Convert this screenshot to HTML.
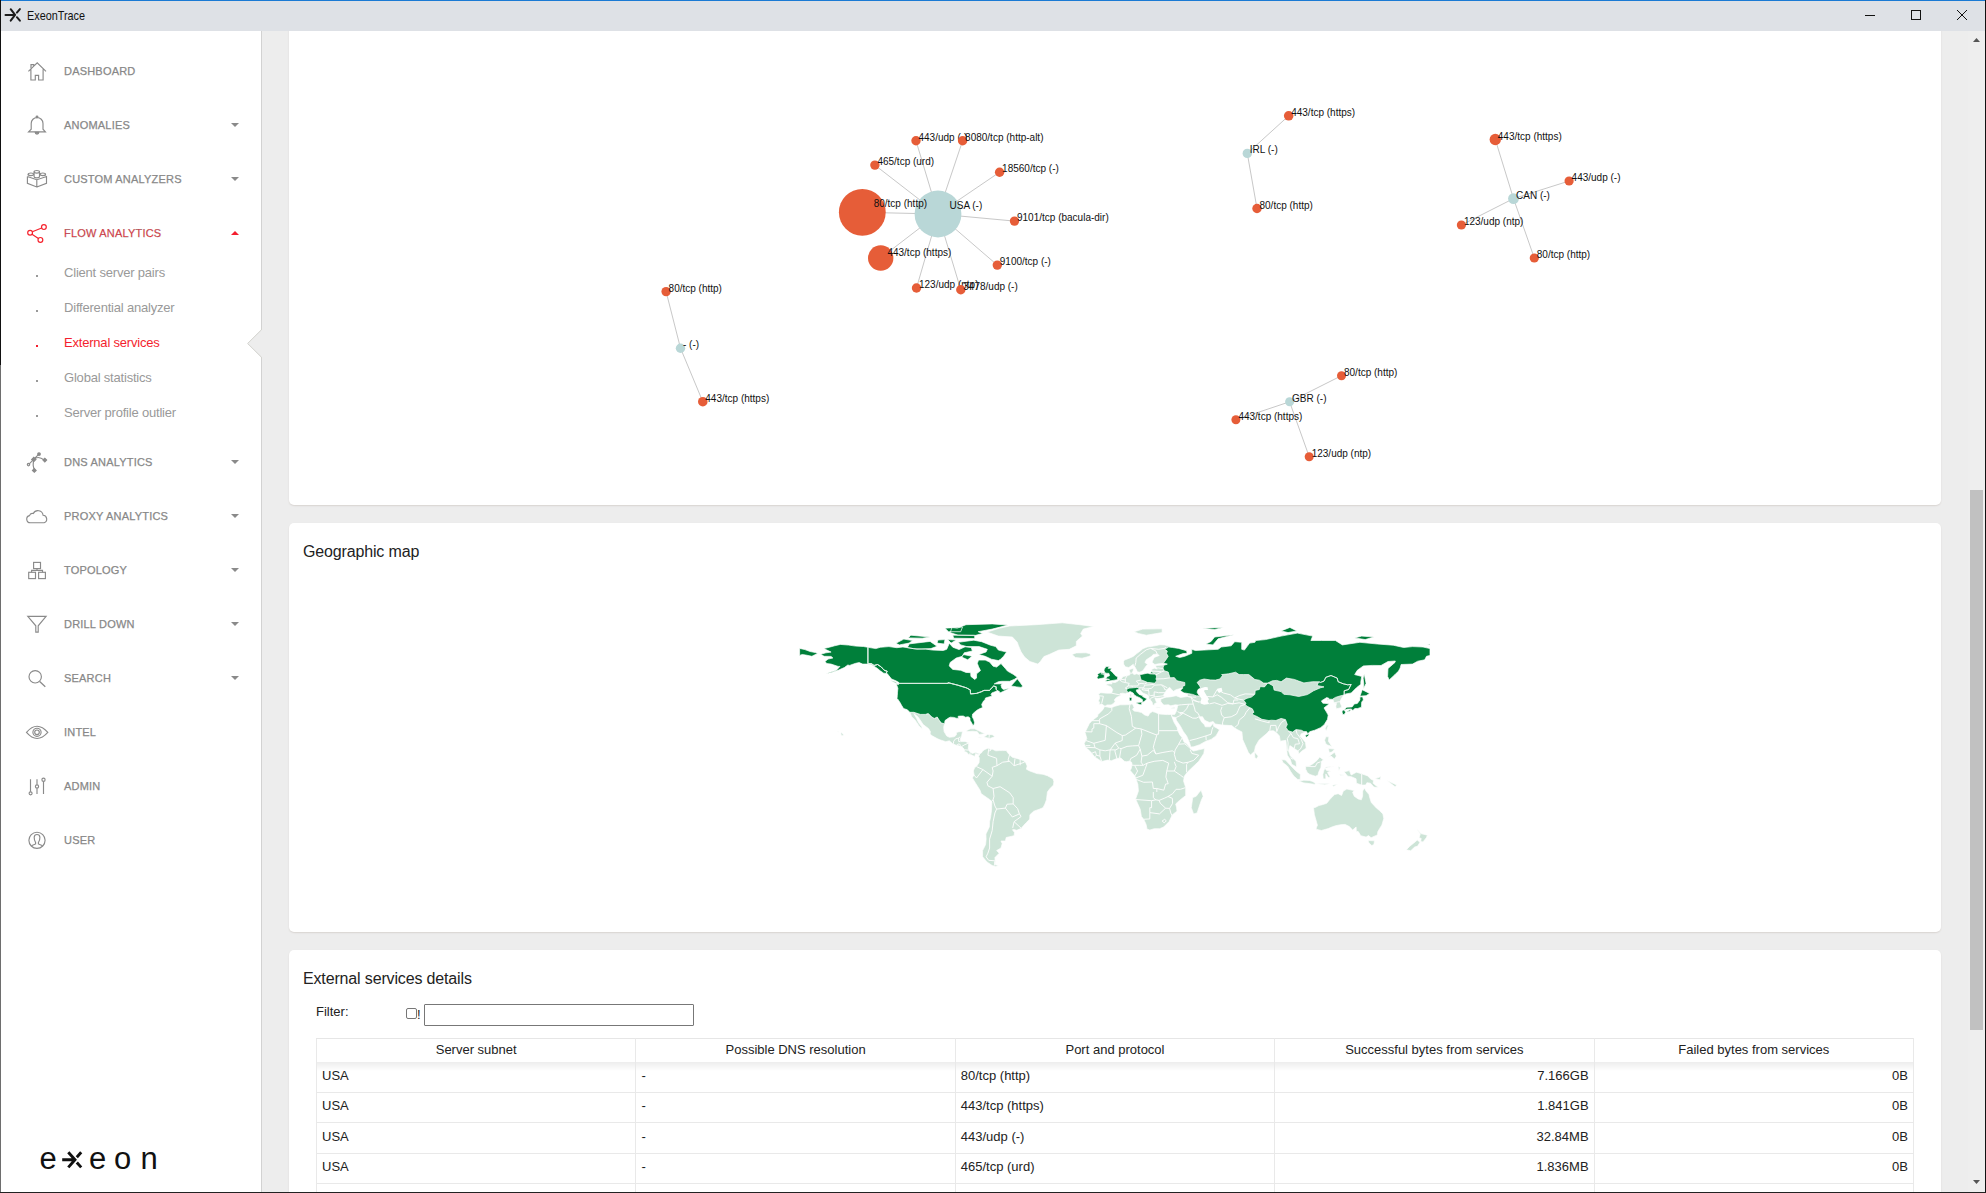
<!DOCTYPE html>
<html><head><meta charset="utf-8">
<style>
*{box-sizing:border-box;margin:0;padding:0}
html,body{width:1986px;height:1193px;overflow:hidden;background:#ededed;font-family:"Liberation Sans",sans-serif;position:relative}
.abs{position:absolute}
#tb{z-index:5;left:0;top:0;width:1986px;height:31px;background:#dee1e6;border-top:1px solid #1a7ad4}
#tb .t{left:27px;top:8px;font-size:12.4px;color:#111;white-space:nowrap;transform:scaleX(0.875);transform-origin:0 0}
#lb{z-index:6;left:0;top:0;width:1px;height:1193px;background:linear-gradient(#111 0,#111 365px,#6e6e6e 365px)}
#rb{z-index:6;left:1985px;top:0;width:1px;height:1193px;background:#111}
#bb{z-index:6;left:0;top:1192px;width:1986px;height:1px;background:#222}
#sb{left:1px;top:31px;width:260px;height:1162px;background:#fff}
#sbb{left:261px;top:31px;width:1px;height:1162px;background:#d2d2d2}
.mi{position:absolute;left:64px;font-size:11px;color:#888;white-space:nowrap;-webkit-text-stroke:0.25px #888;margin-top:-1px;letter-spacing:0.2px}
.si{position:absolute;left:64px;font-size:13px;letter-spacing:-0.2px;color:#999;white-space:nowrap}
.dot{position:absolute;left:36px;width:1.5px;height:1.5px;background:#999}
.car{position:absolute;left:231px;width:0;height:0;border-left:4px solid transparent;border-right:4px solid transparent;border-top:4px solid #8a8a8a}
.lg{top:1138.5px;font-size:31px;color:#111;line-height:40px}
.card{position:absolute;left:289px;width:1652px;background:#fff;border-radius:5px;box-shadow:0 1px 1.5px rgba(110,90,70,0.16)}
#scr{left:1968px;top:31px;width:17px;height:1161px;background:#eeeeee}
#thumb{left:1970px;top:490px;width:13px;height:540px;background:#c1c1c1}
.ttl{position:absolute;left:14px;font-size:16px;letter-spacing:-0.15px;color:#222;white-space:nowrap;margin-top:1px}
table{table-layout:fixed;border-collapse:collapse;position:absolute;left:316px;top:1038px;width:1598px;font-size:13px;color:#222}
td,th{border:1px solid #e9e9e9;border-top-color:#e6e6e6;height:30.5px;padding:0 5px 3px 5px;white-space:nowrap}
tr.f td{border-top-style:hidden;background:linear-gradient(rgba(0,0,0,0.07),rgba(0,0,0,0) 9px)}
th{font-weight:normal;height:23px;padding-bottom:2px;text-align:center;border-bottom:0}
td.r{text-align:right}
</style></head><body>
<div id="tb" class="abs"><svg class="abs" style="left:0;top:-1px" width="24" height="30" viewBox="0 0 24 30"><path d="M5.5 14.9H14.6M10.7 9.2L15.1 14.9L10.7 20.6M16.9 12.6L19.9 9.1M16.9 17.2L19.9 20.7" stroke="#1c1c1c" stroke-width="2" fill="none" stroke-linecap="round" stroke-linejoin="round"/></svg><div class="t abs">ExeonTrace</div>
<svg class="abs" style="left:1864px;top:8px" width="108" height="13" viewBox="0 0 108 13"><path d="M1 6.5H11" stroke="#111" stroke-width="1"/><rect x="47.5" y="1.5" width="9" height="9" stroke="#111" fill="none"/><path d="M93 1L103 11M103 1L93 11" stroke="#111" stroke-width="1"/></svg>
</div>
<div id="lb" class="abs"></div><div id="rb" class="abs"></div>
<div id="sb" class="abs"></div>
<div id="sbb" class="abs"></div>

<!-- SIDEBAR -->
<svg class="abs" style="left:0;top:0" width="60" height="870" viewBox="0 0 60 870" fill="none" stroke="#8a8a8a" stroke-width="1.15" stroke-linejoin="miter">
<path d="M28.4 71.4L37.2 62.9L46 71.4M30.9 69.2V80H35.3V75.4H38.6V80H43.1V69.2"/><path d="M31 68.3V64.6H33.8V66" stroke-width="1.2"/>
<path d="M28.6 131.8H45.4L43 129.2V123.4A5.9 5.9 0 0 0 31.2 123.4V129.2Z"/><circle cx="37" cy="117" r="0.9" fill="#8a8a8a"/><path d="M35.2 132.3A1.8 1.8 0 0 0 38.8 132.3Z" fill="#8a8a8a"/>
<path d="M27.4 176.5V183.3L36.8 187V179.8L46.5 176.5V183.3L36.8 187M27.4 176.5L36.8 179.8"/><ellipse cx="36.8" cy="171.8" rx="2.7" ry="1.3"/><ellipse cx="30.9" cy="174.3" rx="2.7" ry="1.3"/><ellipse cx="42.8" cy="174.3" rx="2.7" ry="1.3"/><path d="M34.1 171.8V176.5A2.7 1.3 0 0 0 39.5 176.5V171.8M28.2 174.3V175.6M45.5 174.3V175.6"/>
<g stroke="#f5222d" stroke-width="1.2"><circle cx="30.1" cy="232.7" r="2.4"/><circle cx="43.9" cy="227.1" r="2.4"/><circle cx="40.4" cy="239.9" r="2.4"/><path d="M32.3 231.8L41.7 228M32 234.2L38.4 238.5"/></g>
<path d="M28.8 464.3L38.6 454.3M44.7 460.2Q37 455 34 460Q32.2 464 34.4 470.2"/><circle cx="28.5" cy="464.6" r="1.2"/><circle cx="39" cy="454" r="1.3" fill="#8a8a8a"/><rect x="32.3" y="457.9" width="3" height="3" fill="#8a8a8a" transform="rotate(45 33.8 459.4)"/><rect x="43.5" y="458.8" width="2.6" height="2.6" fill="#8a8a8a" transform="rotate(45 44.8 460.1)"/><rect x="33" y="469.1" width="2.6" height="2.6" fill="#8a8a8a" transform="rotate(45 34.3 470.4)"/>
<path d="M30.4 522.7H44.1A3.8 3.8 0 0 0 43.1 515.3A5.2 5.2 0 0 0 33.3 513.5A3.1 3.1 0 0 0 29.5 515.6A3.6 3.6 0 0 0 30.4 522.7Z"/>
<rect x="33.6" y="562.4" width="6.9" height="6.2"/><rect x="28.7" y="572.3" width="6.8" height="6.3"/><rect x="38.6" y="572.3" width="6.8" height="6.3"/><path d="M37 568.6V570.3M31.6 572.3V570.3H42.5V572.3"/>
<path d="M27.8 616.4H46.1L38.2 625.8V632.1H35.8V625.8Z"/>
<circle cx="35.2" cy="676.8" r="6.2"/><path d="M39.7 681.6L45.3 686.8" stroke-width="1.3"/>
<path d="M26.5 732.4Q37 720 47.8 732.4Q37 744.5 26.5 732.4Z"/><circle cx="37" cy="732.3" r="4.1"/><circle cx="37" cy="732.3" r="2.3"/>
<path d="M30.5 779.3V791.8M37 779.3V784.8M37 788V794M43.5 781.4V794"/><circle cx="30.6" cy="793.3" r="1.5"/><circle cx="37" cy="786.4" r="1.6"/><circle cx="43.5" cy="779.7" r="1.6"/>
<circle cx="37" cy="840.3" r="8.1"/><path d="M31.4 845.8L35.6 843.9V842.5Q34.1 840 34.2 837.2Q34.4 834.5 37 834.5Q39.7 834.5 39.9 837.2Q40 840 38.4 842.5V843.9L42.6 845.8"/>
</svg>
<div id="side">
<div class="mi" style="top:66px">DASHBOARD</div>
<div class="mi" style="top:120px">ANOMALIES</div><div class="car" style="top:123px"></div>
<div class="mi" style="top:174px">CUSTOM ANALYZERS</div><div class="car" style="top:177px"></div>
<div class="mi" style="top:228px;color:#f41e2e">FLOW ANALYTICS</div><div class="car" style="top:231px;border-top:0;border-bottom:4px solid #f41e2e"></div>
<div class="si" style="top:265px">Client server pairs</div><div class="dot" style="top:275px"></div>
<div class="si" style="top:300px">Differential analyzer</div><div class="dot" style="top:310px"></div>
<div class="si" style="top:335px;color:#f41e2e">External services</div><div class="dot" style="top:345px;background:#f41e2e"></div>
<div class="si" style="top:370px">Global statistics</div><div class="dot" style="top:380px"></div>
<div class="si" style="top:405px">Server profile outlier</div><div class="dot" style="top:415px"></div>
<div class="mi" style="top:457px">DNS ANALYTICS</div><div class="car" style="top:460px"></div>
<div class="mi" style="top:511px">PROXY ANALYTICS</div><div class="car" style="top:514px"></div>
<div class="mi" style="top:565px">TOPOLOGY</div><div class="car" style="top:568px"></div>
<div class="mi" style="top:619px">DRILL DOWN</div><div class="car" style="top:622px"></div>
<div class="mi" style="top:673px">SEARCH</div><div class="car" style="top:676px"></div>
<div class="mi" style="top:727px">INTEL</div>
<div class="mi" style="top:781px">ADMIN</div>
<div class="mi" style="top:835px">USER</div>
<div class="abs lg" style="left:39.5px">e</div><div class="abs lg" style="left:89px">e</div><div class="abs lg" style="left:114px">o</div><div class="abs lg" style="left:140.5px">n</div>
<svg class="abs" style="left:0;top:1140px" width="90" height="40" viewBox="0 1140 90 40"><path d="M62.2 1159.8H74.5M68.3 1152.3L75 1159.8L68.3 1167.4M76.8 1157.2L81.2 1152.3M76.8 1162.5L81.2 1167.4" stroke="#111" stroke-width="2.9" fill="none"/></svg>
</div>
<!-- pointer -->
<svg class="abs" style="left:246px;top:328px" width="17" height="31" viewBox="0 0 17 31"><path d="M15 1.5L1.5 15.5L15 29.5H17V1.5Z" fill="#ededed"/><path d="M15.5 0V1.8L1.6 15.5L15.5 29.2V31" fill="none" stroke="#d3d3ce" stroke-width="1"/></svg>

<!-- CARDS -->
<div class="card" id="c1" style="top:20px;height:485px"></div>
<svg id="graph" class="abs" style="left:0;top:0" width="1986" height="505" viewBox="0 0 1986 505"><g stroke="#c8c8c8" stroke-width="1"><line x1="938" y1="214" x2="916" y2="140.8"/><line x1="938" y1="214" x2="962.6" y2="140.8"/><line x1="938" y1="214" x2="874.9" y2="165.1"/><line x1="938" y1="214" x2="999.6" y2="172.2"/><line x1="938" y1="214" x2="862.3" y2="212.3"/><line x1="938" y1="214" x2="1014.5" y2="221.1"/><line x1="938" y1="214" x2="880.7" y2="258"/><line x1="938" y1="214" x2="997.3" y2="265.1"/><line x1="938" y1="214" x2="916.5" y2="288"/><line x1="938" y1="214" x2="960.8" y2="289.8"/><line x1="680.5" y1="348.2" x2="666.1" y2="291.6"/><line x1="680.5" y1="348.2" x2="702.8" y2="401.7"/><line x1="1247.3" y1="153.4" x2="1288.7" y2="115.8"/><line x1="1247.3" y1="153.4" x2="1257" y2="208.5"/><line x1="1513.5" y1="198.6" x2="1495.3" y2="139.5"/><line x1="1513.5" y1="198.6" x2="1569.1" y2="181"/><line x1="1513.5" y1="198.6" x2="1461.4" y2="225"/><line x1="1513.5" y1="198.6" x2="1534.3" y2="258"/><line x1="1289.6" y1="401.8" x2="1341.5" y2="375.7"/><line x1="1289.6" y1="401.8" x2="1235.9" y2="419.8"/><line x1="1289.6" y1="401.8" x2="1309.2" y2="456.7"/></g><g font-size="10" fill="#111" font-family="Liberation Sans, sans-serif"><circle cx="938" cy="214" r="23.4" fill="#b9d7d7"/><text x="949.5" y="209.0">USA (-)</text><circle cx="916" cy="140.8" r="4.7" fill="#e65d38"/><text x="918.5" y="140.8">443/udp (-)</text><circle cx="962.6" cy="140.8" r="4.7" fill="#e65d38"/><text x="965.1" y="140.8">8080/tcp (http-alt)</text><circle cx="874.9" cy="165.1" r="4.7" fill="#e65d38"/><text x="877.4" y="165.1">465/tcp (urd)</text><circle cx="999.6" cy="172.2" r="4.7" fill="#e65d38"/><text x="1002.1" y="172.2">18560/tcp (-)</text><circle cx="862.3" cy="212.3" r="23.4" fill="#e65d38"/><text x="873.7" y="207.1">80/tcp (http)</text><circle cx="1014.5" cy="221.1" r="4.7" fill="#e65d38"/><text x="1017.0" y="221.1">9101/tcp (bacula-dir)</text><circle cx="880.7" cy="258" r="12.7" fill="#e65d38"/><text x="887.4" y="255.5">443/tcp (https)</text><circle cx="997.3" cy="265.1" r="4.7" fill="#e65d38"/><text x="999.8" y="265.1">9100/tcp (-)</text><circle cx="916.5" cy="288" r="4.7" fill="#e65d38"/><text x="919.0" y="288.0">123/udp (ntp)</text><circle cx="960.8" cy="289.8" r="4.7" fill="#e65d38"/><text x="963.3" y="289.8">3478/udp (-)</text><circle cx="680.5" cy="348.2" r="4.7" fill="#b9d7d7"/><text x="683.0" y="348.2">- (-)</text><circle cx="666.1" cy="291.6" r="4.7" fill="#e65d38"/><text x="668.6" y="291.6">80/tcp (http)</text><circle cx="702.8" cy="401.7" r="4.8" fill="#e65d38"/><text x="705.3" y="401.7">443/tcp (https)</text><circle cx="1247.3" cy="153.4" r="4.7" fill="#b9d7d7"/><text x="1249.8" y="153.4">IRL (-)</text><circle cx="1288.7" cy="115.8" r="4.8" fill="#e65d38"/><text x="1291.2" y="115.8">443/tcp (https)</text><circle cx="1257" cy="208.5" r="4.7" fill="#e65d38"/><text x="1259.5" y="208.5">80/tcp (http)</text><circle cx="1513.5" cy="198.6" r="5.4" fill="#b9d7d7"/><text x="1516.0" y="198.6">CAN (-)</text><circle cx="1495.3" cy="139.5" r="5.7" fill="#e65d38"/><text x="1497.8" y="139.5">443/tcp (https)</text><circle cx="1569.1" cy="181" r="4.6" fill="#e65d38"/><text x="1571.6" y="181.0">443/udp (-)</text><circle cx="1461.4" cy="225" r="4.6" fill="#e65d38"/><text x="1463.9" y="225.0">123/udp (ntp)</text><circle cx="1534.3" cy="258" r="4.6" fill="#e65d38"/><text x="1536.8" y="258.0">80/tcp (http)</text><circle cx="1289.6" cy="401.8" r="4.5" fill="#b9d7d7"/><text x="1292.1" y="401.8">GBR (-)</text><circle cx="1341.5" cy="375.7" r="4.5" fill="#e65d38"/><text x="1344.0" y="375.7">80/tcp (http)</text><circle cx="1235.9" cy="419.8" r="4.5" fill="#e65d38"/><text x="1238.4" y="419.8">443/tcp (https)</text><circle cx="1309.2" cy="456.7" r="4.5" fill="#e65d38"/><text x="1311.7" y="456.7">123/udp (ntp)</text></g></svg>
<div class="card" id="c2" style="top:523px;height:409px"><div class="ttl" style="top:19px">Geographic map</div></div>
<svg class="abs" style="left:0;top:0" width="1986" height="1193" viewBox="0 0 1986 1193"><path d="M1105.0 706.2 1101.8 704.1 1099.2 704.4 1099.4 701.8 1098.2 701.3 1099.6 698.3 1099.2 695.7 1098.5 693.9 1100.8 692.7 1106.9 693.2 1111.6 693.2 1112.7 689.5 1110.9 686.7 1106.6 685.2 1106.7 684.1 1109.5 683.8 1112.0 683.9 1111.5 682.2 1115.2 682.5 1117.6 681.3 1119.2 679.7 1121.1 679.2 1123.0 676.6 1126.9 675.7 1129.9 674.8 1129.9 672.0 1129.0 669.7 1133.4 668.2 1133.2 670.3 1132.3 672.9 1134.1 674.6 1136.7 673.8 1139.7 674.8 1147.2 673.2 1149.5 673.9 1151.7 671.7 1151.6 669.4 1154.4 668.2 1157.3 669.0 1155.9 666.8 1155.9 665.5 1163.8 665.0 1167.7 664.3 1165.6 663.3 1158.6 663.8 1154.9 664.5 1152.3 662.7 1152.4 661.2 1154.2 657.5 1159.3 655.4 1157.2 654.0 1153.3 654.5 1151.2 656.6 1146.3 659.8 1144.9 662.4 1147.7 664.5 1146.5 665.4 1143.7 669.4 1142.8 670.8 1139.7 672.2 1137.2 671.8 1136.7 670.3 1135.6 668.2 1134.4 666.1 1133.2 665.4 1133.4 664.3 1128.8 667.5 1125.3 666.8 1123.6 664.1 1123.6 661.5 1124.3 660.1 1128.8 658.4 1133.2 656.4 1136.7 653.6 1140.2 651.0 1142.8 648.7 1147.2 647.0 1153.3 646.1 1160.0 644.7 1164.7 644.9 1169.1 646.1 1172.6 647.5 1178.7 648.4 1186.6 650.7 1187.1 653.3 1183.1 653.6 1175.7 656.3 1179.6 657.5 1184.8 656.3 1191.8 653.3 1191.8 649.3 1195.3 650.5 1208.5 649.8 1218.1 649.3 1221.3 647.0 1231.2 645.8 1234.7 641.7 1241.7 642.3 1241.7 649.3 1244.4 650.1 1249.6 643.1 1254.9 642.3 1255.8 640.5 1265.4 639.6 1281.1 636.1 1297.4 633.1 1312.7 636.1 1310.9 640.5 1321.4 640.5 1335.4 640.5 1342.4 644.9 1359.9 642.3 1377.4 644.0 1393.2 645.2 1403.7 647.5 1412.5 646.6 1423.0 647.0 1430.0 648.6 1430.0 655.4 1426.5 656.3 1424.7 659.8 1417.7 661.2 1412.5 664.1 1401.1 664.5 1400.2 668.0 1398.5 671.1 1395.0 674.6 1389.2 679.9 1387.6 676.4 1388.0 668.5 1395.0 662.4 1395.3 661.0 1388.0 661.5 1381.0 665.5 1372.2 665.4 1363.4 665.9 1357.3 670.3 1354.7 674.6 1361.7 676.4 1360.8 681.7 1360.8 684.3 1356.4 687.8 1351.2 693.0 1345.9 693.9 1343.7 695.1 1341.9 697.8 1339.8 701.8 1341.6 706.2 1341.2 707.7 1336.3 708.8 1335.8 706.2 1336.5 703.5 1333.9 702.7 1333.1 699.7 1327.5 699.2 1327.2 701.3 1328.9 698.3 1326.7 697.6 1321.4 700.9 1322.8 703.2 1329.3 703.7 1324.0 707.9 1326.5 712.1 1328.2 715.1 1327.5 719.3 1324.2 724.7 1320.5 727.7 1314.8 730.2 1310.0 731.6 1307.8 733.7 1306.5 731.6 1301.3 733.7 1300.1 735.9 1305.5 742.4 1306.2 748.2 1302.2 750.8 1298.7 754.0 1298.3 751.2 1295.2 749.1 1289.9 745.6 1288.5 750.8 1290.4 756.1 1296.0 761.3 1296.6 766.9 1291.7 764.3 1290.4 759.6 1287.3 755.2 1286.9 751.7 1285.9 740.3 1280.3 741.2 1279.4 735.9 1276.2 732.4 1273.3 730.7 1268.9 731.0 1267.0 733.3 1262.8 736.8 1258.9 740.3 1255.4 746.4 1254.5 751.2 1250.5 755.0 1248.4 752.6 1245.8 746.6 1242.6 739.4 1242.3 735.9 1241.9 731.9 1237.7 729.8 1234.7 728.1 1231.8 725.6 1222.7 725.1 1215.1 724.0 1213.2 721.6 1209.4 722.4 1204.6 720.3 1202.5 716.7 1198.8 716.8 1201.6 721.9 1204.6 724.9 1205.2 726.8 1210.2 726.8 1213.4 723.1 1213.6 726.3 1216.2 727.7 1219.5 729.8 1216.0 735.9 1211.1 739.4 1205.9 741.2 1199.7 744.7 1193.6 746.8 1190.8 747.0 1189.6 742.9 1186.6 735.9 1183.3 731.6 1180.5 726.3 1176.3 720.2 1175.9 717.5 1171.9 716.7 1171.4 714.4 1174.7 714.4 1176.1 711.8 1177.0 708.8 1177.5 706.5 1178.2 705.1 1175.2 704.8 1170.8 705.8 1168.4 704.8 1163.8 705.1 1162.4 703.5 1160.9 701.8 1160.7 699.2 1165.6 697.2 1170.0 696.9 1176.1 695.7 1180.5 697.4 1187.5 696.5 1187.6 694.6 1184.3 692.2 1180.5 690.9 1181.9 688.1 1176.1 689.7 1173.5 691.3 1171.7 689.7 1170.0 687.6 1168.6 688.0 1166.8 690.1 1164.9 692.7 1163.7 694.8 1163.8 696.5 1165.6 697.1 1160.3 698.1 1156.8 698.3 1154.9 698.1 1155.9 700.9 1156.8 702.7 1154.7 703.5 1154.2 705.3 1152.6 704.8 1152.1 702.1 1150.3 700.0 1148.8 698.3 1148.9 696.0 1147.2 694.8 1142.8 693.0 1140.2 690.1 1138.8 689.4 1136.3 689.9 1136.7 691.8 1139.1 694.4 1142.8 695.8 1142.6 696.5 1147.2 699.0 1144.6 700.9 1143.7 701.8 1142.3 702.7 1142.5 699.7 1139.8 697.8 1136.7 696.4 1134.1 694.8 1133.2 693.0 1130.2 691.5 1127.9 692.5 1125.3 693.7 1122.7 693.2 1120.1 693.6 1120.4 695.7 1116.4 697.4 1114.3 700.0 1115.2 701.3 1113.6 703.4 1111.1 704.9 1107.1 704.9ZM1104.5 706.5 1102.9 709.7 1097.6 714.9 1098.0 716.0 1092.0 720.7 1089.4 723.5 1085.0 732.4 1085.9 735.1 1086.8 738.6 1084.2 743.5 1085.6 747.3 1087.7 749.1 1091.2 752.6 1094.7 756.9 1101.7 761.5 1107.8 760.1 1111.3 760.8 1116.9 758.5 1120.8 758.0 1124.4 761.3 1126.2 761.7 1129.7 761.1 1131.8 762.5 1132.0 764.8 1131.3 768.3 1130.2 770.6 1134.9 775.9 1136.3 779.7 1137.9 784.6 1138.4 791.1 1135.6 799.0 1140.2 809.3 1141.4 816.5 1143.7 819.3 1146.1 824.4 1147.0 829.1 1149.8 830.1 1154.2 828.7 1159.6 828.7 1163.7 827.0 1169.1 821.6 1172.4 814.7 1177.0 811.2 1176.6 807.7 1175.7 803.9 1179.2 800.7 1185.7 795.5 1185.7 787.6 1183.6 781.1 1184.3 776.2 1187.5 772.0 1194.1 765.7 1198.8 761.3 1203.8 753.4 1204.6 748.5 1199.7 749.6 1193.6 751.0 1190.4 749.1 1189.2 746.4 1186.6 743.8 1184.0 741.9 1182.2 737.7 1179.9 734.9 1177.8 730.7 1177.0 727.2 1174.3 722.8 1173.5 721.0 1171.9 716.7 1171.4 714.4 1167.2 714.6 1162.1 714.2 1158.9 713.9 1155.1 712.3 1152.4 711.6 1149.8 713.2 1148.1 716.1 1144.6 714.9 1141.6 712.6 1137.9 711.6 1134.1 711.1 1132.5 709.1 1134.2 707.6 1132.7 704.4 1132.0 703.9 1129.7 704.6 1123.6 704.8 1120.1 704.8 1114.8 706.3 1111.3 707.7ZM979.4 754.0 981.4 752.9 982.6 751.0 984.9 749.4 987.9 748.2 990.5 749.1 989.6 751.2 991.9 748.9 995.7 750.8 999.2 750.6 1002.7 750.6 1006.2 750.5 1008.9 754.3 1012.4 757.3 1018.5 758.9 1023.2 760.6 1025.5 762.2 1027.2 766.0 1026.4 769.2 1029.9 771.0 1036.9 773.6 1043.0 774.3 1047.4 775.7 1053.0 778.8 1053.9 781.6 1053.5 785.0 1050.0 788.5 1047.4 792.0 1046.5 799.8 1044.8 804.2 1043.0 807.7 1039.2 809.3 1033.7 811.2 1029.9 814.7 1029.7 819.1 1026.4 822.6 1023.6 825.4 1021.1 828.4 1016.7 830.3 1014.1 829.6 1012.5 829.8 1014.5 832.6 1014.1 835.7 1006.2 837.5 1005.4 841.0 1001.0 841.0 1002.2 843.6 1001.0 848.0 996.6 850.6 999.2 853.2 994.9 857.6 995.2 860.8 994.9 864.6 998.4 865.5 995.7 866.4 992.2 865.5 987.0 862.0 982.6 856.8 982.6 850.6 985.6 844.5 986.1 839.2 985.9 834.0 989.3 827.0 989.6 821.7 990.7 816.5 991.5 810.3 991.9 801.6 989.6 799.5 981.2 793.7 980.0 790.2 975.6 783.2 972.4 778.0 973.0 776.7 974.2 775.2 973.3 771.0 974.7 767.6 976.8 766.0 979.1 762.5 979.3 757.8 978.4 756.6ZM909.8 712.3 911.7 716.7 915.2 720.2 918.7 725.4 922.2 729.1 921.7 726.8 918.7 722.8 916.6 718.4 913.8 713.5 917.8 716.7 920.4 720.3 923.1 724.5 928.5 728.6 930.4 731.6 930.1 734.2 932.2 735.8 937.1 738.6 939.9 739.8 945.8 741.7 949.3 740.8 952.8 743.8 955.5 744.9 959.8 746.1 961.6 746.6 964.2 749.1 964.7 751.7 966.8 752.2 968.6 754.5 971.2 754.8 974.7 756.4 975.6 753.6 978.2 754.7 979.4 754.0 978.6 753.6 975.6 752.6 972.1 753.4 968.9 750.8 968.2 749.1 968.8 742.9 965.1 741.4 960.7 741.4 960.2 739.4 961.6 735.9 962.5 731.6 959.0 731.7 956.5 732.4 956.3 735.1 954.1 736.8 949.3 737.3 946.7 735.9 944.1 731.6 943.7 727.2 944.6 723.7 941.3 723.0 939.2 720.2 937.2 717.0 934.3 718.4 931.8 717.0 928.3 713.5 925.3 714.4 920.4 714.4 913.8 712.3ZM966.0 730.9 970.3 728.8 974.7 728.8 979.1 731.0 984.9 733.8 979.1 734.4 977.3 731.7 973.0 731.2 967.7 731.6ZM984.5 736.8 987.5 734.4 992.2 734.7 995.0 736.6 990.1 738.4 984.5 737.3ZM977.7 737.0 981.4 737.5 980.0 738.0ZM987.0 632.1 999.2 628.2 1009.7 626.0 1036.0 624.7 1062.3 622.8 1079.8 624.7 1093.8 626.5 1083.3 629.1 1080.7 633.5 1082.4 636.1 1076.3 641.4 1076.3 645.8 1069.3 649.3 1058.8 650.1 1049.1 654.5 1043.9 656.6 1040.4 661.5 1037.8 664.1 1029.9 661.5 1024.6 657.1 1021.1 651.9 1018.5 645.8 1017.3 642.3 1012.4 637.0 998.4 636.1ZM1071.9 654.5 1076.3 652.9 1085.9 652.8 1089.4 653.6 1091.2 655.2 1088.5 656.6 1082.1 658.2 1075.4 657.5ZM1313.5 807.7 1314.4 814.7 1316.2 820.9 1317.4 825.2 1316.2 828.0 1316.3 829.3 1321.4 830.5 1328.2 828.6 1331.9 827.0 1335.4 825.8 1340.7 824.7 1345.1 824.4 1349.4 826.6 1352.6 830.1 1356.1 827.0 1356.3 831.4 1358.2 831.5 1360.8 835.7 1366.1 837.1 1368.5 835.6 1371.1 837.7 1377.4 834.9 1377.8 831.7 1379.7 828.4 1381.8 825.2 1383.8 818.6 1382.9 813.9 1379.2 810.3 1376.6 808.2 1371.3 802.5 1369.6 797.2 1369.0 794.6 1366.1 791.1 1364.3 787.9 1362.7 791.1 1362.6 796.3 1361.3 799.8 1358.2 799.0 1354.3 796.3 1352.6 792.3 1354.3 790.6 1346.8 789.0 1343.3 791.1 1341.6 795.5 1338.1 793.7 1334.6 794.6 1331.0 798.1 1328.8 800.7 1326.7 803.3 1322.3 804.7 1318.8 805.6 1315.3 807.4ZM1368.0 840.5 1374.5 840.8 1373.9 844.5 1371.8 845.5 1369.0 843.1ZM1417.2 829.4 1420.9 833.6 1427.4 835.2 1426.3 837.8 1423.0 841.9 1420.7 841.5 1421.2 838.4 1419.1 837.8 1420.3 834.0ZM1417.2 840.1 1420.0 842.2 1417.7 846.1 1414.6 847.1 1410.7 850.8 1406.3 849.7 1409.8 846.2 1415.1 841.9ZM1344.2 771.8 1349.4 770.6 1351.2 775.0 1356.4 772.2 1361.7 773.8 1367.8 775.9 1370.4 778.8 1373.6 780.6 1373.1 783.2 1378.3 787.6 1373.9 787.1 1370.4 783.2 1366.9 782.7 1365.7 785.0 1361.7 785.1 1356.4 783.2 1356.1 778.8 1351.2 776.7 1347.7 776.2 1345.9 774.1ZM1281.7 759.4 1285.5 760.1 1290.8 765.7 1296.0 771.0 1300.4 774.5 1300.2 779.4 1297.8 779.5 1293.9 776.2 1290.8 771.8 1287.6 766.2 1282.9 762.5ZM1299.0 781.1 1303.9 780.2 1309.2 780.4 1312.1 781.3 1315.3 782.9 1314.9 784.4 1309.2 783.6 1303.9 782.9 1299.5 781.3ZM1305.7 766.6 1309.2 766.0 1312.7 763.9 1317.0 760.4 1319.7 756.9 1323.5 759.9 1321.4 761.3 1320.9 767.4 1318.8 771.8 1317.9 775.3 1315.3 776.2 1310.0 774.5 1307.4 772.7 1305.7 769.2ZM1323.2 778.8 1325.8 779.0 1325.8 773.9 1328.4 777.6 1330.2 777.1 1327.5 772.4 1330.7 771.0 1326.7 770.6 1324.9 768.3 1332.8 766.6 1334.0 766.6 1325.8 767.1 1324.0 770.1 1322.8 774.5ZM1325.8 736.8 1328.9 736.8 1328.4 741.2 1331.9 746.4 1327.5 745.0 1325.8 743.8 1324.6 740.3ZM1328.4 756.9 1334.6 752.2 1336.3 756.1 1334.6 759.0 1331.0 756.1ZM1328.4 748.5 1334.6 749.1 1331.9 752.0 1329.3 752.6ZM1325.1 728.9 1326.7 725.1 1328.4 725.4 1326.3 730.7ZM1254.5 752.0 1258.2 756.1 1256.6 758.7 1254.9 757.8ZM1201.1 790.2 1203.2 796.3 1201.5 799.8 1198.8 807.7 1197.1 813.0 1193.6 813.9 1191.3 807.7 1192.7 797.6 1196.2 796.3 1198.8 792.8ZM1134.1 631.7 1142.8 629.1 1162.1 628.8 1162.1 632.6 1146.3 635.2 1138.4 633.5ZM1129.9 693.9 1131.4 694.1 1131.1 696.7 1130.0 696.4ZM1155.9 706.9 1160.9 707.4 1159.5 708.1 1155.9 707.6ZM1171.4 707.9 1175.2 706.9 1174.3 708.4 1171.7 708.4ZM1331.9 785.5 1337.5 783.9 1333.7 786.5ZM1338.1 766.6 1340.3 767.4 1338.9 770.6ZM1338.9 774.5 1344.2 775.0 1340.7 775.5ZM1387.1 780.6 1396.7 785.0 1395.0 786.7ZM1374.8 778.8 1381.0 776.6 1380.1 779.7ZM1316.2 783.6 1330.2 783.6 1324.9 784.8ZM841.5 732.6 843.7 735.1 841.8 736.1 840.8 733.8ZM837.6 731.4 838.8 731.9 838.0 732.1Z" fill="#cde4d7" stroke="#fdfdfd" stroke-width="0.7" stroke-linejoin="round"/><path d="M1111.8 707.7 1111.8 710.5 1108.5 713.9 1099.6 718.9 1099.6 720.7 1091.7 720.7M1085.0 731.7 1092.0 731.9 1092.0 728.9 1093.8 728.1 1093.8 723.7 1099.6 723.7 1099.6 720.7M1099.6 723.7 1106.4 725.6 1105.2 740.3 1093.8 743.3 1085.9 740.5M1106.4 725.6 1116.9 732.6 1122.3 735.6 1125.3 735.1 1135.8 728.1M1129.9 704.6 1129.2 708.8 1131.4 716.3 1132.3 726.3 1135.8 728.1M1135.8 728.1 1141.1 728.9 1156.8 735.1 1156.8 734.2 1158.6 734.2 1158.6 730.7M1158.6 713.9 1158.6 730.7 1179.6 730.7M1122.3 735.6 1122.2 740.5 1115.2 743.1 1110.1 749.9 1105.2 750.8 1099.9 749.9 1095.0 747.7 1093.8 743.3M1110.1 749.9 1115.7 749.9 1118.8 748.2 1115.2 743.1M1119.5 748.2 1121.1 748.7 1127.1 746.4 1132.3 745.9 1138.6 745.6 1141.9 734.2 1141.1 728.9M1156.8 735.1 1154.2 743.8 1153.3 747.3 1155.9 754.0 1153.3 750.3 1147.2 755.2 1141.9 756.1M1138.6 745.6 1140.2 749.1 1136.7 755.2 1130.6 758.7 1129.9 761.1M1140.2 749.1 1141.9 756.1 1141.1 762.2 1143.2 765.3 1147.2 763.1 1154.2 761.3 1162.8 760.4M1155.9 754.0 1162.1 752.6 1172.6 750.8 1174.3 752.6M1178.7 744.2 1175.2 749.9 1174.3 754.3 1176.1 760.4 1183.1 763.1 1188.2 762.2 1193.6 760.4 1198.7 755.2 1191.8 753.4 1190.1 749.9M1178.7 744.2 1184.8 743.8 1189.0 747.3M1182.2 737.7 1178.7 744.2M1186.6 772.2 1186.6 764.3 1188.2 762.2M1174.3 761.8 1176.1 766.6 1174.3 771.0 1180.6 775.3 1183.4 777.4M1162.8 760.4 1168.7 763.1 1166.6 771.8 1165.9 777.1 1168.2 783.7M1185.5 787.6 1180.5 789.3 1176.1 789.3M1136.2 779.4 1143.7 782.3 1152.4 782.0 1153.3 788.5 1156.8 788.5 1156.8 792.0M1156.8 788.5 1163.8 790.2 1165.6 784.1 1168.2 783.7M1135.8 778.0 1142.8 775.3 1145.4 768.3 1147.2 763.1M1132.0 765.2 1134.6 765.3 1139.3 765.3 1143.2 765.3M1134.6 765.3 1137.6 771.0 1134.9 775.9M1135.5 799.5 1151.6 800.7 1155.9 799.8M1153.3 792.0 1153.3 797.7 1155.9 799.8M1149.8 807.7 1149.8 812.6 1149.8 818.9 1143.7 819.3M1149.8 812.6 1159.5 813.9 1165.6 808.2 1169.6 808.4M1151.6 800.7 1151.6 807.7 1149.8 807.7M1155.9 799.8 1159.1 800.4 1164.7 798.1 1168.0 796.5M1168.0 796.5 1172.4 798.4 1172.6 803.3 1169.6 808.4M1159.1 800.4 1160.3 803.3 1165.6 808.2M1168.0 796.5 1172.6 793.7 1176.1 789.3M1169.6 808.4 1170.8 813.0 1172.4 816.3M1091.5 753.4 1095.5 751.7 1096.4 755.2 1094.7 757.1M1099.9 756.1 1101.7 761.5M1099.9 749.9 1099.9 756.1 1096.4 755.2M1109.4 760.3 1109.9 752.6 1110.1 749.9M1116.9 758.5 1114.8 750.8 1115.7 749.9M1119.5 758.0 1121.1 748.7M1085.6 745.6 1090.3 745.6M1085.6 747.3 1095.0 747.7M1162.1 821.0 1164.7 819.3 1166.3 820.9 1164.2 822.8 1162.1 821.0M1166.6 771.0 1174.3 771.0M988.7 749.1 987.9 755.2 996.6 758.3 997.0 765.7 1002.7 762.2 1009.7 761.3M976.5 766.6 982.9 769.6 992.2 776.2M974.2 775.2 976.5 778.0 982.9 769.6M997.0 765.7 992.2 767.4 993.1 771.0 992.2 776.2M1009.7 754.3 1008.0 760.4 1009.7 761.3 1014.1 765.7 1024.6 762.2M1015.0 758.7 1014.1 765.7M1020.2 759.2 1020.2 765.3M992.2 776.2 987.0 782.3 987.9 785.8 993.1 788.5 994.0 796.3 993.1 799.8 991.5 801.2M993.1 788.5 1000.1 786.7 1009.7 792.8 1013.2 797.7 1013.2 803.9M993.1 799.8 994.9 806.0 996.6 809.1 1005.4 808.1 1007.1 804.2 1013.2 803.9M1013.2 803.9 1017.6 808.6 1019.4 813.9M1005.4 808.1 1012.4 817.0 1019.4 813.9 1021.1 816.5 1014.1 821.7 1012.7 827.9M1014.1 821.7 1021.1 828.2M996.6 809.1 994.9 813.0 993.1 821.7 992.2 830.5 989.6 839.2 989.6 848.0 987.9 853.2 986.1 856.8 988.7 860.3 994.9 860.8M994.7 861.3 994.7 865.5M1099.2 695.8 1103.4 696.2 1102.5 700.0 1101.7 703.5M1111.6 693.2 1120.4 695.0M1119.2 679.7 1122.3 681.8 1125.3 682.5 1129.2 683.4 1128.1 685.9 1125.3 688.1 1127.1 688.8M1125.3 682.5 1125.3 678.5 1127.1 675.9M1120.8 679.2 1125.3 679.9M1129.9 673.1 1132.3 673.2M1128.1 685.9 1131.4 686.0 1137.6 686.0 1139.0 683.9 1136.3 681.1 1140.7 680.1M1139.0 683.9 1141.1 683.4 1144.6 683.9 1147.7 682.5M1144.6 685.2 1143.7 687.8 1138.8 687.8M1131.4 686.0 1133.2 687.3M1144.6 685.2 1149.8 684.8 1154.2 684.3 1154.4 683.2M1154.2 685.2 1151.6 688.3 1148.1 688.8 1144.6 689.0 1143.7 687.8M1154.2 685.2 1161.2 684.8 1164.2 687.8 1164.7 689.5 1166.8 690.1M1154.2 691.8 1158.6 692.7 1164.9 692.7M1148.1 688.8 1148.9 692.2 1148.9 694.8M1154.2 691.8 1154.2 695.1 1150.7 695.7 1148.9 694.8M1143.7 687.8 1141.9 689.5 1144.6 690.2 1148.1 690.6M1154.2 696.9 1160.3 696.2 1163.8 695.7M1149.6 700.0 1151.6 697.6 1154.2 696.9 1154.2 695.1M1156.3 679.0 1163.8 678.7 1170.0 677.8M1155.9 674.8 1161.2 672.0 1164.2 670.8M1151.6 671.0 1161.4 671.7M1157.3 667.8 1162.8 668.5M1157.2 654.0 1155.9 651.0 1150.7 648.4M1150.7 648.4 1146.3 649.8 1140.2 654.5 1136.2 658.0 1135.8 662.4 1134.9 665.9M1150.7 648.4 1158.6 649.3 1164.7 648.4 1165.6 647.0M1161.4 684.6 1167.3 687.8M1178.2 705.1 1181.3 704.8 1188.9 704.2 1193.2 704.1 1192.2 700.0 1191.0 697.2 1187.6 696.5M1188.9 704.2 1186.6 708.8 1183.1 712.6 1179.6 714.0M1176.1 717.5 1179.6 715.8 1183.1 713.2 1192.7 718.1 1196.2 718.2 1198.8 716.8M1177.5 711.4 1179.2 712.6 1183.1 712.6M1193.2 704.1 1194.5 707.9 1195.3 711.4 1198.0 713.2 1199.7 716.7M1189.7 740.5 1196.2 738.9 1205.9 735.9 1211.1 734.2 1212.0 729.8 1212.9 727.2M1206.2 740.1 1205.9 735.9M1222.0 706.9 1220.7 710.5 1221.6 714.9 1224.2 717.7 1222.5 722.8 1222.7 725.1M1209.4 703.9 1214.6 702.7 1222.0 705.3M1224.2 717.7 1231.2 716.8 1236.5 714.0 1238.2 710.5 1240.0 706.2 1245.2 704.4M1222.0 705.3 1227.7 703.5 1233.0 703.9 1239.1 702.8 1245.2 704.4M1234.7 727.5 1238.2 724.5 1239.1 720.2 1244.4 715.8 1246.1 712.3 1250.5 707.0M1254.9 718.8 1261.9 721.0 1269.2 722.8 1268.9 720.5M1269.8 730.7 1270.6 725.4 1275.9 725.4 1276.8 731.6M1276.8 731.6 1278.5 727.2 1281.5 722.4 1285.5 719.6M1288.1 730.7 1290.8 733.3 1287.3 738.6 1288.1 742.9 1287.6 750.8M1290.8 733.3 1293.4 737.7 1297.8 738.6 1299.5 743.8 1295.2 744.2 1294.3 748.2M1296.0 729.6 1296.9 733.3 1301.3 739.4 1303.0 743.8 1300.4 749.1 1297.8 750.8M1290.4 757.8 1292.5 759.0 1293.6 758.3M1207.6 696.5 1212.9 696.9 1217.2 689.5 1223.4 693.0 1230.4 694.8 1234.7 697.9 1239.1 695.7 1245.2 693.9 1254.9 694.3M1212.9 696.9 1217.2 694.8 1221.6 697.4 1227.7 702.7 1233.0 703.9M1234.7 697.9 1239.1 699.2 1243.5 700.0M1233.0 703.9 1233.9 700.0 1238.2 700.0M1204.1 696.5 1207.6 696.5M1187.6 696.5 1192.7 697.1 1196.2 697.1M1191.0 697.2 1193.6 699.7 1196.2 701.1 1198.8 702.0M1193.2 700.4 1198.8 702.0 1200.4 701.8M1333.7 703.2 1337.2 702.1 1339.6 701.6M953.4 743.8 953.7 741.2 955.5 738.9 958.6 738.0 960.2 736.8M958.6 738.0 958.6 741.4 960.4 741.7M957.0 745.0 959.0 743.8 961.1 745.7M961.9 746.4 964.7 744.7 969.1 742.9M964.7 749.8 968.2 750.1M969.6 755.2 970.2 752.4M978.4 756.6 979.4 754.0M1361.7 773.8 1361.7 785.1M989.3 734.5 989.1 737.7M1306.7 765.9 1310.9 766.6 1315.3 766.6 1317.0 763.1 1320.5 761.8" fill="none" stroke="#fdfdfd" stroke-width="0.95"/><path d="M1196.6 691.3 1198.5 689.0 1201.5 688.0 1205.0 686.9 1207.6 687.3 1208.0 689.9 1204.6 690.1 1204.1 691.3 1206.7 695.7 1207.3 696.5 1209.0 699.2 1207.6 700.9 1209.2 703.9 1204.1 704.8 1200.6 703.5 1200.4 701.8 1201.5 698.8 1199.7 696.0 1198.0 693.9 1197.1 692.2ZM1217.2 688.7 1221.6 687.8 1222.5 691.3 1219.0 693.0 1217.2 690.4Z" fill="#fff"/><path d="M896.5 684.5 899.4 683.4 948.1 683.4 948.1 682.7 957.9 685.2 966.3 687.8 970.3 689.9 970.5 693.9 976.5 693.4 981.2 691.8 984.0 690.4 989.6 690.4 992.2 687.4 993.6 686.1 996.1 686.7 996.1 689.2 997.5 690.8 994.9 691.8 991.9 692.9 991.0 694.6 992.2 696.0 989.6 696.7 985.4 698.1 985.2 699.5 983.5 701.1 982.6 702.7 981.7 704.4 982.6 707.6 980.0 708.6 977.3 710.0 974.9 711.9 972.6 714.0 972.3 716.7 973.7 719.5 974.5 722.4 974.0 725.1 972.8 725.2 971.6 722.8 970.0 720.2 970.0 718.1 968.2 716.8 965.4 717.2 963.3 716.0 959.8 716.1 958.1 716.3 958.6 718.2 956.3 718.2 953.7 717.4 950.2 717.2 948.5 718.1 945.0 720.5 944.6 723.7 941.3 723.0 939.2 720.2 937.2 717.0 934.3 718.4 931.8 717.0 928.3 713.5 925.3 714.4 920.4 714.4 913.8 712.3 909.8 712.3 907.3 709.7 903.6 708.6 901.4 705.1 900.3 703.0 898.0 699.5 897.0 698.5 897.3 695.7 897.5 692.2 897.9 688.3ZM867.9 647.3 875.8 648.6 880.2 647.3 888.9 646.6 896.8 647.7 902.9 647.0 913.4 648.6 925.7 649.1 932.7 650.1 943.2 650.5 946.7 649.3 949.3 643.3 952.8 647.2 959.0 649.6 965.1 646.8 971.2 647.5 972.4 651.0 964.2 652.8 962.5 656.3 956.3 658.0 950.2 662.4 949.2 665.9 952.8 669.4 960.7 670.3 966.0 672.4 970.7 672.7 970.9 676.4 974.7 679.4 976.5 678.1 976.6 673.8 980.5 670.6 978.6 666.8 977.3 663.3 978.6 660.1 985.2 660.1 989.6 662.0 993.1 666.2 996.6 667.1 1001.0 663.6 1005.4 668.5 1007.5 671.1 1013.2 674.3 1017.3 677.3 1014.6 679.2 1009.7 681.3 1001.9 681.3 998.4 681.7 994.2 683.9 1002.4 683.8 1001.0 685.2 1001.9 688.3 1003.6 689.5 1009.7 688.3 999.9 693.0 999.2 691.3 997.5 690.8 996.1 689.2 996.1 686.7 993.6 686.1 992.2 687.4 989.6 690.4 984.0 690.4 981.2 691.8 976.5 693.4 970.5 693.9 970.3 689.9 966.3 687.8 957.9 685.2 948.1 682.7 948.1 683.4 899.4 683.4 898.9 682.5 895.9 680.8 891.5 679.0 887.2 673.6 886.1 673.4 887.2 671.3 884.0 670.1 881.2 666.9 877.5 664.5 874.0 665.5 871.4 663.6 867.9 663.6ZM867.9 647.3 863.5 646.5 855.7 646.1 848.6 645.1 840.4 644.4 834.6 645.8 829.4 647.2 823.8 648.6 831.1 652.1 825.9 652.8 820.6 654.3 824.1 656.3 831.1 656.4 832.9 658.0 828.0 659.1 825.0 661.5 826.8 663.6 831.1 664.1 838.1 666.4 839.9 666.4 836.4 670.3 829.4 672.4 826.1 673.8 831.5 672.5 838.1 670.3 844.3 667.6 847.8 665.0 849.7 665.4 852.1 664.5 855.7 663.3 859.2 662.6 862.7 664.1 867.9 664.1 871.4 664.3 874.0 666.2 877.5 668.5 880.2 670.8 883.7 673.2 886.1 673.4 887.2 671.3 884.0 670.1 881.2 666.9 877.5 664.5 874.0 665.5 871.4 663.6 867.9 663.6ZM895.9 643.3 903.8 639.1 912.6 640.5 909.1 643.1 899.4 644.9ZM908.2 644.0 930.1 641.4 937.1 646.3 930.9 648.6 916.9 649.3 907.3 647.5 909.1 644.4ZM910.8 635.2 930.1 637.0 922.2 638.2 908.2 637.9ZM937.9 640.0 945.0 639.6 944.1 644.0 937.1 643.1ZM947.6 639.6 956.3 640.0 951.1 643.1ZM952.8 635.2 974.7 635.2 974.7 638.6 953.7 638.2ZM957.2 628.2 966.0 624.7 992.2 623.9 1008.0 625.1 992.2 629.1 978.2 631.7 982.6 633.5 974.7 635.6 958.1 635.2 950.2 632.6 952.0 627.4ZM945.0 628.2 962.5 627.0 960.7 631.7 948.5 631.7ZM973.8 640.2 981.7 641.7 990.5 645.2 995.7 646.6 998.4 650.1 1006.6 652.1 1003.6 656.3 1000.6 659.2 998.4 660.6 991.4 659.2 985.2 656.3 978.7 654.5 986.1 651.9 987.3 649.3 979.1 646.6 966.8 646.6 960.7 644.9 958.1 642.3ZM963.3 654.5 972.1 656.3 967.7 659.8 961.6 657.1ZM1011.0 685.9 1017.4 678.8 1022.7 686.0 1021.1 687.4 1016.7 686.9ZM890.1 680.2 898.6 684.6 895.0 681.7ZM1106.0 666.6 1109.5 666.6 1108.0 668.3 1111.6 668.3 1110.4 670.6 1112.0 671.8 1114.4 674.5 1115.2 675.5 1117.8 676.9 1117.4 679.2 1117.3 679.7 1113.0 680.4 1108.7 681.1 1104.8 681.6 1107.3 679.5 1109.5 679.4 1105.5 678.5 1107.6 676.6 1109.5 675.7 1109.0 673.4 1105.9 673.2 1104.8 672.4 1103.9 670.1 1104.8 668.3ZM1102.0 672.7 1105.2 673.8 1103.8 674.5 1100.8 673.8ZM1097.3 674.3 1100.4 672.5 1102.0 672.7 1104.3 674.6 1104.3 677.8 1098.2 679.0 1096.8 678.0 1098.2 675.5ZM1168.7 647.0 1164.7 649.3 1167.3 651.0 1166.5 653.6 1168.2 656.3 1166.5 658.9 1163.5 663.1 1163.8 663.3 1167.3 664.1 1164.7 665.0 1163.8 665.2 1163.0 668.0 1164.2 670.8 1168.2 672.0 1170.0 677.8 1174.3 677.6 1177.0 680.8 1181.3 681.7 1184.8 682.5 1184.8 685.5 1181.9 686.7 1183.1 687.8 1181.3 689.5 1180.5 690.8 1184.0 693.0 1184.8 693.0 1188.3 693.6 1192.7 694.4 1196.2 695.8 1199.7 696.0 1198.0 693.9 1197.1 692.2 1198.0 689.5 1200.6 688.1 1199.7 686.0 1197.1 682.5 1199.7 680.2 1204.1 679.0 1210.2 679.9 1215.5 680.1 1219.9 679.0 1222.5 675.5 1221.6 674.6 1228.6 673.8 1235.6 672.2 1239.1 674.6 1243.5 674.6 1248.8 674.6 1254.9 679.5 1259.3 680.2 1263.6 683.1 1267.7 683.1 1272.4 680.8 1276.8 680.4 1281.1 681.8 1286.4 678.1 1294.3 679.4 1298.7 681.1 1303.9 682.9 1312.7 681.7 1318.8 681.8 1320.5 682.4 1324.0 681.1 1325.8 677.3 1331.0 675.5 1337.2 678.1 1338.1 681.7 1343.3 683.8 1347.7 684.8 1351.2 684.5 1350.3 686.0 1348.6 689.5 1344.2 690.8 1344.2 694.3 1343.7 695.1 1345.9 693.9 1351.2 693.0 1356.4 687.8 1360.8 684.3 1360.8 681.7 1361.7 676.4 1354.7 674.6 1357.3 670.3 1363.4 665.9 1372.2 665.4 1381.0 665.5 1388.0 661.5 1395.3 661.0 1395.0 662.4 1388.0 668.5 1387.6 676.4 1389.2 679.9 1395.0 674.6 1398.5 671.1 1400.2 668.0 1401.1 664.5 1412.5 664.1 1417.7 661.2 1424.7 659.8 1426.5 656.3 1430.0 655.4 1430.0 648.6 1423.0 647.0 1412.5 646.6 1403.7 647.5 1393.2 645.2 1377.4 644.0 1359.9 642.3 1342.4 644.9 1335.4 640.5 1321.4 640.5 1310.9 640.5 1312.7 636.1 1297.4 633.1 1281.1 636.1 1265.4 639.6 1255.8 640.5 1254.9 642.3 1249.6 643.1 1244.4 650.1 1241.7 649.3 1241.7 642.3 1234.7 641.7 1231.2 645.8 1221.3 647.0 1218.1 649.3 1208.5 649.8 1195.3 650.5 1191.8 649.3 1191.8 653.3 1184.8 656.3 1179.6 657.5 1175.7 656.3 1183.1 653.6 1187.1 653.3 1186.6 650.7 1178.7 648.4 1172.6 647.5ZM1149.5 673.9 1151.7 671.7 1154.7 673.9ZM1363.4 688.7 1366.1 683.4 1365.2 679.0 1364.3 674.1 1363.1 678.1 1363.8 684.3ZM1205.9 644.0 1211.1 641.4 1214.6 637.0 1233.9 634.7 1218.1 638.8 1212.9 644.9ZM1281.1 630.9 1289.9 627.4 1296.9 630.9 1288.1 632.6ZM1354.7 637.9 1361.7 636.1 1373.9 637.0 1365.2 639.6ZM1427.4 644.4 1430.0 644.0 1430.0 645.1ZM1202.3 628.2 1223.4 627.4 1214.6 629.5ZM1343.7 695.1 1344.2 694.3 1344.2 690.8 1348.6 689.5 1350.3 686.0 1351.2 684.5 1347.7 684.8 1343.3 683.8 1338.1 681.7 1337.2 678.1 1331.0 675.5 1325.8 677.3 1324.0 681.1 1320.5 682.4 1318.8 681.8 1317.0 685.5 1324.0 686.9 1320.5 687.8 1313.5 690.8 1310.0 693.0 1307.4 694.6 1298.7 696.5 1289.9 694.8 1283.8 694.3 1281.1 691.6 1274.1 690.1 1273.3 686.0 1268.9 683.4 1267.7 683.1 1264.5 686.9 1260.1 686.6 1259.3 689.5 1255.2 690.4 1254.9 694.3 1251.4 697.1 1247.0 698.3 1243.5 700.0 1246.1 703.5 1245.2 704.4 1247.0 706.2 1252.3 708.8 1254.0 712.3 1252.3 713.2 1253.1 714.9 1256.6 716.3 1261.9 719.3 1268.9 720.5 1271.5 720.2 1275.9 720.5 1281.1 718.4 1285.5 719.6 1287.3 724.5 1285.9 727.2 1288.1 730.7 1292.5 732.1 1296.0 729.6 1301.3 730.2 1303.9 731.6 1306.5 731.6 1307.8 733.7 1310.0 731.6 1314.8 730.2 1320.5 727.7 1324.2 724.7 1327.5 719.3 1328.2 715.1 1326.5 712.1 1324.0 707.9 1329.3 703.7 1322.8 703.2 1321.4 700.9 1326.7 697.6 1328.9 698.3 1327.2 701.3 1327.5 699.2 1332.4 699.3 1335.4 697.4 1339.8 696.0ZM1305.0 735.6 1308.3 734.0 1309.2 734.9 1306.5 737.3ZM1139.7 674.8 1147.2 673.2 1154.7 673.9 1155.9 674.8 1156.6 676.9 1155.9 679.0 1156.8 680.8 1154.4 683.2 1148.9 682.5 1147.7 682.5 1143.7 680.8 1141.1 679.9 1140.4 677.3ZM1127.9 692.5 1126.7 690.4 1127.1 688.8 1129.7 688.1 1133.2 687.8 1136.7 687.4 1138.8 687.8 1138.8 689.4 1136.3 689.9 1136.7 691.8 1139.1 694.4 1142.8 695.8 1142.6 696.5 1147.2 699.0 1144.6 700.9 1143.7 701.8 1142.3 702.7 1142.5 699.7 1139.8 697.8 1136.7 696.4 1134.1 694.8 1133.2 693.0 1130.2 691.5ZM1136.5 702.5 1142.1 702.1 1141.2 704.9 1136.9 703.4ZM1129.2 697.4 1132.0 697.4 1131.6 700.7 1129.5 700.9ZM1344.0 709.7 1346.8 707.2 1352.1 706.9 1354.3 703.9 1357.3 703.5 1359.9 700.0 1359.9 697.1 1362.6 696.7 1363.4 700.0 1361.7 702.1 1361.5 705.3 1361.3 707.4 1359.1 707.9 1357.8 708.6 1354.7 708.6 1352.9 710.5 1351.2 709.0 1347.7 709.1 1345.1 709.8ZM1342.1 710.7 1344.2 709.8 1345.6 712.3 1344.2 714.6 1342.8 714.6 1342.1 712.3ZM1346.8 711.4 1350.7 709.3 1350.3 710.9 1347.7 711.8ZM1359.9 696.5 1362.2 689.7 1369.6 693.4 1366.1 695.7 1361.7 696.0ZM799.6 648.4 804.9 649.6 810.1 651.5 815.4 652.6 817.7 653.6 814.5 654.9 811.9 656.3 805.7 655.0 802.2 654.5 799.6 655.4Z" fill="#007f3a" stroke="#fdfdfd" stroke-width="0.7" stroke-linejoin="round"/><path d="M899.4 683.4 948.1 683.4 948.1 682.7 957.9 685.2 966.3 687.8 970.3 689.9 970.5 693.9 976.5 693.4 981.2 691.8 984.0 690.4 989.6 690.4 992.2 687.4 993.6 686.1 996.1 686.7 996.1 689.2 997.5 690.8M867.9 647.3 867.9 663.6 871.4 663.6 874.0 665.5 877.5 664.5 881.2 666.9 884.0 670.1 887.2 671.3 886.1 673.4" fill="none" stroke="#d9ece0" stroke-width="0.7"/></svg>
<div class="card" id="c3" style="top:950px;height:300px"><div class="ttl" style="top:19px">External services details</div>
<div class="abs" style="left:27px;top:54px;font-size:13px;color:#222">Filter:</div>
<div class="abs" style="left:117px;top:58px;width:11px;height:11px;border:1px solid #777;border-radius:2px"></div>
<div class="abs" style="left:128px;top:57px;font-size:13px;color:#222">!</div>
<div class="abs" style="left:135px;top:54px;width:270px;height:22px;border:1px solid #777;border-radius:1px"></div>
</div>
<table>
<tr><th>Server subnet</th><th>Possible DNS resolution</th><th>Port and protocol</th><th>Successful bytes from services</th><th>Failed bytes from services</th></tr>
<tr class="f"><td>USA</td><td>-</td><td>80/tcp (http)</td><td class="r">7.166GB</td><td class="r">0B</td></tr>
<tr><td>USA</td><td>-</td><td>443/tcp (https)</td><td class="r">1.841GB</td><td class="r">0B</td></tr>
<tr><td>USA</td><td>-</td><td>443/udp (-)</td><td class="r">32.84MB</td><td class="r">0B</td></tr>
<tr><td>USA</td><td>-</td><td>465/tcp (urd)</td><td class="r">1.836MB</td><td class="r">0B</td></tr>
<tr><td>USA</td><td>-</td><td>18560/tcp (-)</td><td class="r">1.2MB</td><td class="r">0B</td></tr>
</table>
<div id="tb2" class="abs" style="left:262px;top:1192px;width:1724px;height:1px;background:#ededed"></div>

<div id="scr" class="abs"></div><div id="thumb" class="abs"></div>
<svg class="abs" style="left:1970px;top:34px" width="13" height="1155" viewBox="0 0 13 1155"><path d="M3 8H10L6.5 4Z" fill="#555"/><path d="M3 1146H10L6.5 1150Z" fill="#555"/></svg>
<div id="bb" class="abs"></div>
</body></html>
